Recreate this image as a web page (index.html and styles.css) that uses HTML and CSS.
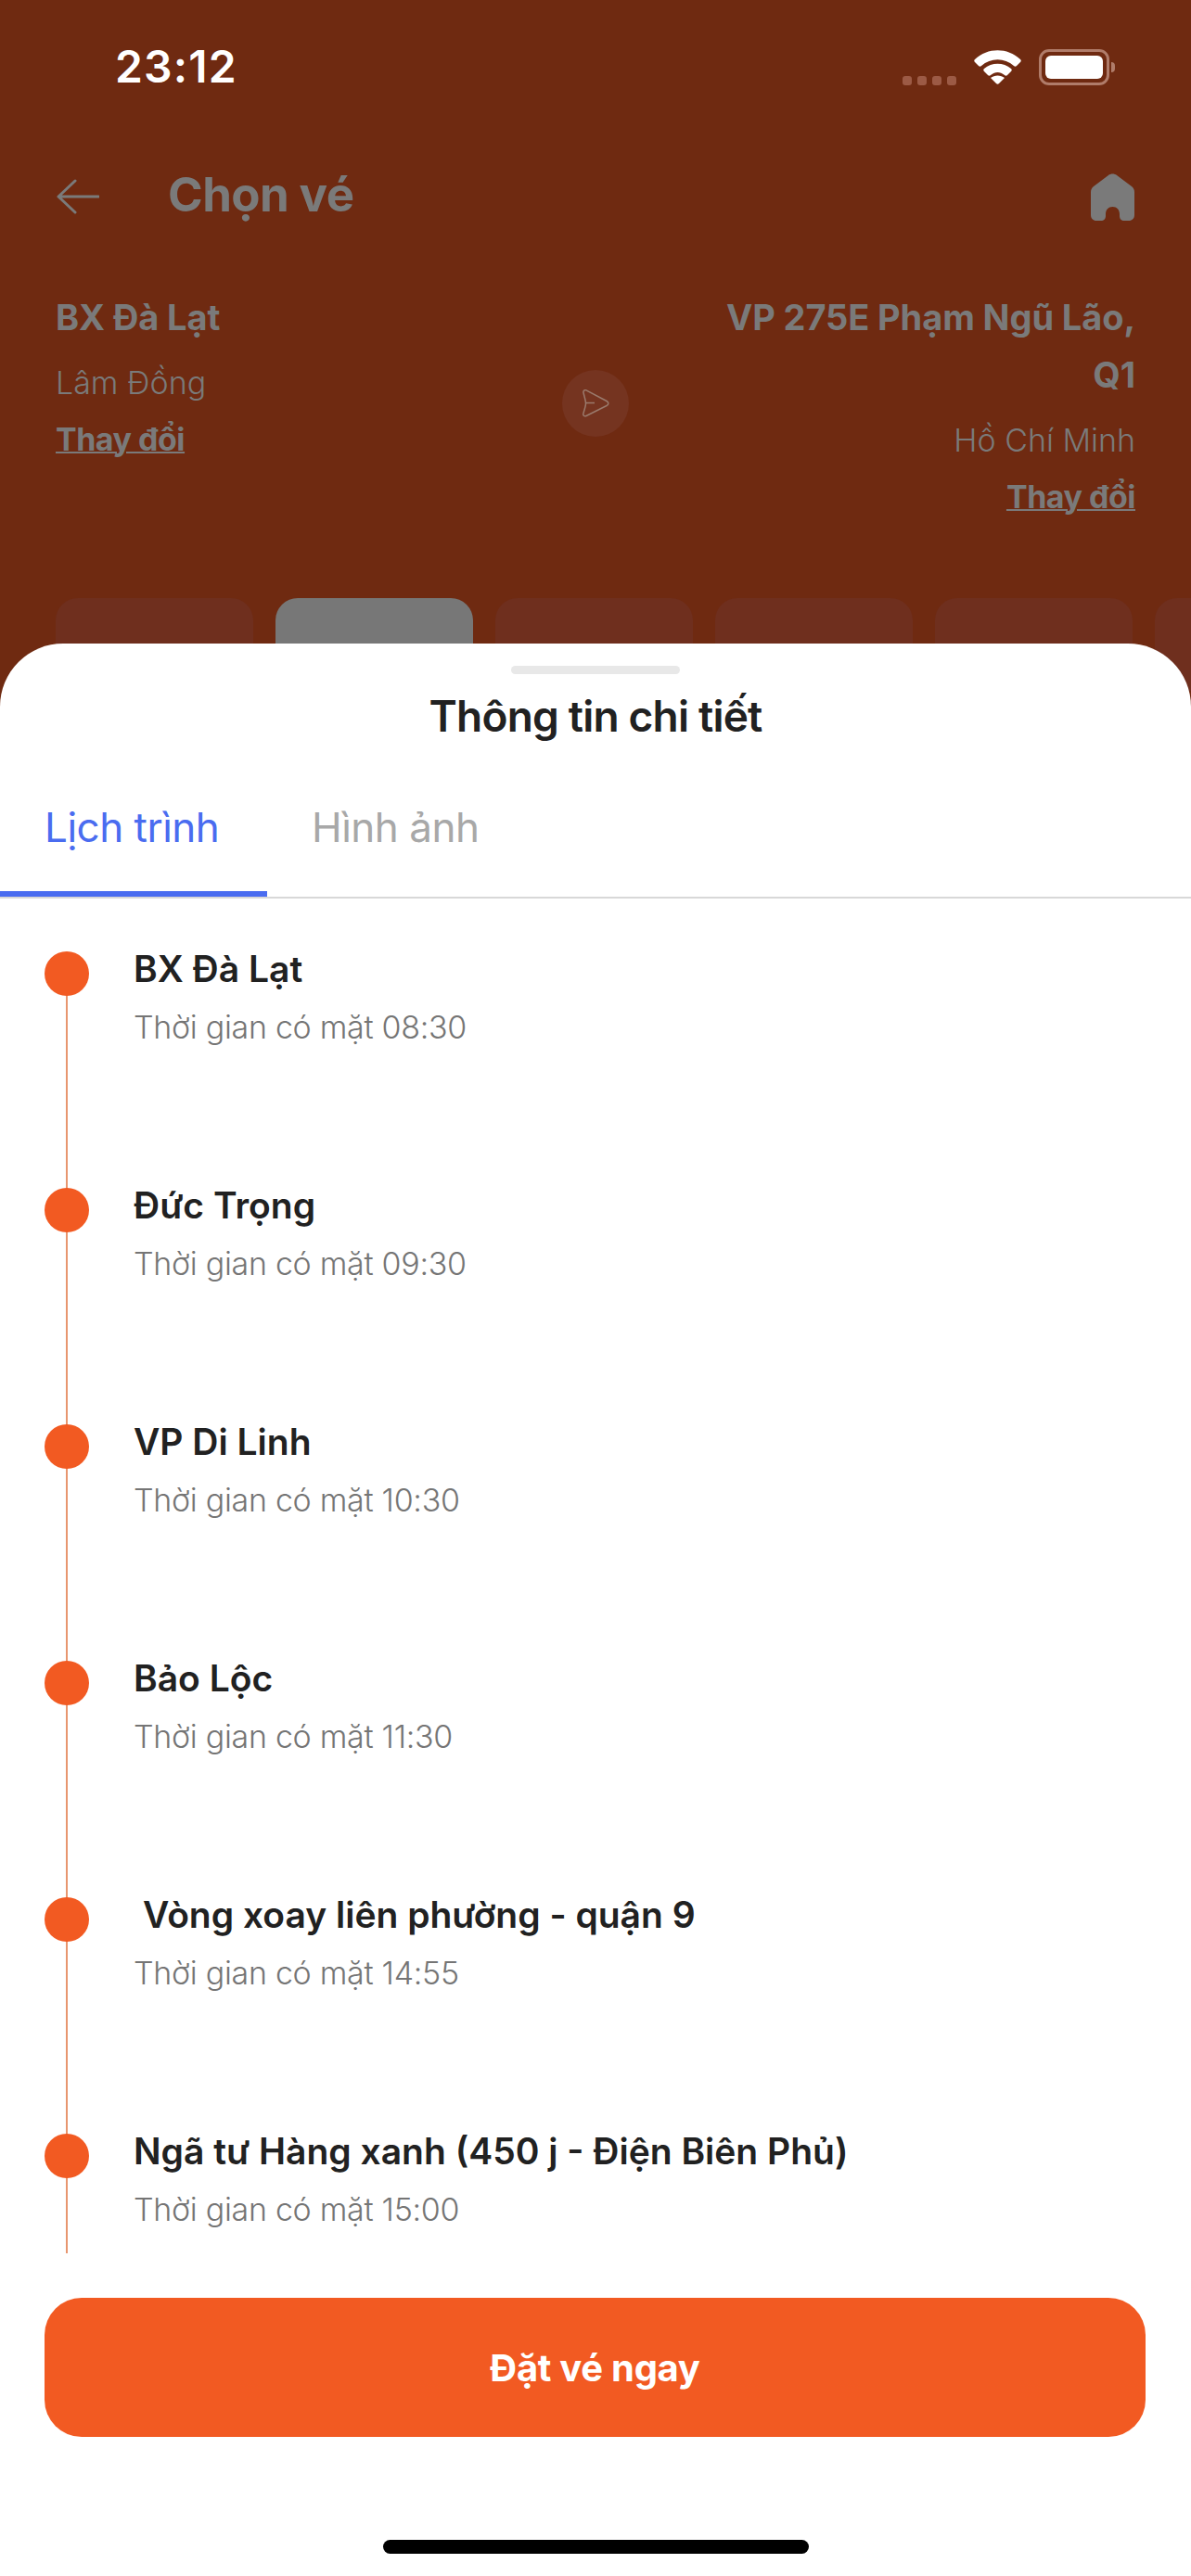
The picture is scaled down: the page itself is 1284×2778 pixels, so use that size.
FILE: index.html
```html
<!DOCTYPE html>
<html lang="vi">
<head>
    <meta charset="UTF-8">
    <meta name="viewport" content="width=device-width, initial-scale=1.0">
    <title>Chọn vé</title>
    <link rel="stylesheet" href="styles.css">
</head>
<body>

<div class="screen">
    <div class="status-bar">
        <span class="clock">23:12</span>
        <div class="status-icons">
            <div class="signal"><i></i><i></i><i></i><i></i></div>
            <svg class="wifi" viewBox="0 0 51 37" width="51" height="37">
                <path d="M1 10 C15 -3 36 -3 50 10 C51 11 51 12 50 13 L46 17 C45 18 44 18 43 17 C33 8 18 8 8 17 C7 18 6 18 5 17 L1 13 C0 12 0 11 1 10 Z" fill="#fff"/>
                <path d="M11 20 C19 13 32 13 40 20 C41 21 41 22 40 23 L36 27 C35 28 34 28 33 27 C28 23 23 23 18 27 C17 28 16 28 15 27 L11 23 C10 22 10 21 11 20 Z" fill="#fff"/>
                <path d="M24 36 L18 30 C22 26.500 29 26.500 33 30 L27 36 C26 37 25 37 24 36 Z" fill="#fff"/>
            </svg>
            <div class="battery"><div class="battery-fill"></div></div>
            <div class="battery-cap"></div>
        </div>
    </div>

    <header class="top-nav">
        <svg class="back" viewBox="0 0 46 38" width="46" height="38">
            <path d="M45 19 H2 M20 2 L2 19 L20 36" fill="none" stroke="#7a7a7a" stroke-width="3" stroke-linecap="round" stroke-linejoin="round"/>
        </svg>
        <h1>Chọn vé</h1>
        <svg class="home" viewBox="0 0 47 51" width="47" height="51">
            <path d="M19 2 L3 14 C1 15.500 0 17.500 0 20 V45 C0 48.500 2.500 51 6 51 H11 C14 51 16 49 16 46 V44 C16 39 19 36 23.500 36 C28 36 31 39 31 44 V46 C31 49 33 51 36 51 H41 C44.500 51 47 48.500 47 45 V20 C47 17.500 46 15.500 44 14 L28 2 C25.500 0 21.500 0 19 2 Z" fill="#7a7a7a"/>
        </svg>
    </header>

    <section class="route">
        <div class="route-end">
            <div class="route-name">BX Đà Lạt</div>
            <div class="route-area">Lâm Đồng</div>
            <a class="route-change">Thay đổi</a>
        </div>
        <div class="swap">
            <svg viewBox="0 0 30 30" width="30" height="30">
                <path d="M2 3.500 C1.500 1.500 3.500 0 5 0.800 L27 12.500 C29.500 14 29.500 16 27 17.500 L5 28.500 C3 29.500 1 28 2 25.500 C3 22 4.500 18 4.500 15 C4.500 12 2.800 7 2 3.500 Z M4.500 14.500 H14" fill="none" stroke="#9a7a6c" stroke-width="1.500" stroke-linejoin="round"/>
            </svg>
        </div>
        <div class="route-end right">
            <div class="route-name">VP 275E Phạm Ngũ Lão, Q1</div>
            <div class="route-area">Hồ Chí Minh</div>
            <a class="route-change">Thay đổi</a>
        </div>
    </section>

    <div class="date-strip">
        <div class="date-chip"></div>
        <div class="date-chip active"></div>
        <div class="date-chip"></div>
        <div class="date-chip"></div>
        <div class="date-chip"></div>
        <div class="date-chip"></div>
    </div>

    <div class="sheet">
        <div class="handle"></div>
        <h2>Thông tin chi tiết</h2>

        <div class="tabs">
            <div class="tab active">Lịch trình</div>
            <div class="tab">Hình ảnh</div>
        </div>

        <ul class="stops">
            <li class="stop">
                <div class="stop-name">BX Đà Lạt</div>
                <div class="stop-time">Thời gian có mặt 08:30</div>
            </li>
            <li class="stop">
                <div class="stop-name">Đức Trọng</div>
                <div class="stop-time">Thời gian có mặt 09:30</div>
            </li>
            <li class="stop">
                <div class="stop-name">VP Di Linh</div>
                <div class="stop-time">Thời gian có mặt 10:30</div>
            </li>
            <li class="stop">
                <div class="stop-name">Bảo Lộc</div>
                <div class="stop-time">Thời gian có mặt 11:30</div>
            </li>
            <li class="stop">
                <div class="stop-name indent">Vòng xoay liên phường - quận 9</div>
                <div class="stop-time">Thời gian có mặt 14:55</div>
            </li>
            <li class="stop">
                <div class="stop-name">Ngã tư Hàng xanh (450 j - Điện Biên Phủ)</div>
                <div class="stop-time">Thời gian có mặt 15:00</div>
            </li>
        </ul>

        <button class="book-btn">Đặt vé ngay</button>
        <div class="home-indicator"></div>
    </div>
</div>

</body>
</html>
```

FILE: styles.css
```css
:root {
    --backdrop: #6f2a11;
    --dim-text: #7a7a7a;
    --orange: #f25a22;
    --blue: #4a6cf0;
    --dark: #212121;
    --font-family: Inter, "Noto Sans", "Liberation Sans", sans-serif;
}

* { box-sizing: border-box; }

body {
    margin: 0;
    font-family: var(--font-family);
    background-color: var(--backdrop);
}

.screen {
    position: relative;
    width: 1284px;
    height: 2778px;
    overflow: hidden;
    background-color: var(--backdrop);
}

/* status bar */
.status-bar {
    height: 163px;
    padding: 44px 0 0 124px;
    display: flex;
    justify-content: space-between;
    align-items: flex-start;
}

.clock {
    color: #fff;
    font-size: 48px;
    font-weight: 600;
    line-height: 56px;
    letter-spacing: 1.2px;
}

.status-icons {
    display: flex;
    align-items: flex-start;
    padding: 9px 82px 0 0;
}

.signal {
    display: flex;
    gap: 6px;
    margin: 29px 19px 0 0;
}

.signal i {
    width: 10px;
    height: 10px;
    border-radius: 3px;
    background-color: #9c5a45;
}

.wifi {
    margin: 1px 19px 0 0;
}

.battery {
    width: 76px;
    height: 39px;
    padding: 4px;
    border: 3px solid #b07c6a;
    border-radius: 11px;
}

.battery-fill {
    height: 100%;
    background-color: #fff;
    border-radius: 6px;
}

.battery-cap {
    width: 4px;
    height: 11px;
    margin: 14px 0 0 2px;
    background-color: #b07c6a;
    border-radius: 0 6px 6px 0;
}

/* page behind the sheet */
.top-nav {
    height: 98px;
    padding: 0 61px;
    display: flex;
    align-items: center;
}

.top-nav h1 {
    margin: 0 0 5px 74px;
    flex: 1;
    color: var(--dim-text);
    font-size: 51px;
    font-weight: 700;
    letter-spacing: -0.6px;
}

.route {
    padding: 50px 60px 0;
    display: flex;
    justify-content: space-between;
    align-items: center;
}

.route-end {
    width: 470px;
    height: 248px;
    color: var(--dim-text);
}

.route-end.right { text-align: right; }

.route-name {
    font-size: 38px;
    font-weight: 700;
    line-height: 62px;
    letter-spacing: -0.1px;
}

.route-area {
    font-size: 34px;
    font-weight: 300;
    line-height: 58px;
    margin-top: 11px;
}

.route-change {
    display: block;
    margin-top: 3px;
    font-size: 34px;
    font-weight: 700;
    line-height: 58px;
    text-decoration: underline;
    text-decoration-thickness: 2px;
    letter-spacing: -0.5px;
}

.swap {
    width: 72px;
    height: 72px;
    flex-shrink: 0;
    border-radius: 50%;
    background-color: #753420;
    display: flex;
    align-items: center;
    justify-content: center;
}

.date-strip {
    margin-top: 86px;
    padding-left: 60px;
    display: flex;
    gap: 24px;
}

.date-chip {
    width: 213px;
    height: 100px;
    flex-shrink: 0;
    border-radius: 24px;
    background-color: #6f2f1e;
}

.date-chip.active { background-color: #777; }

/* bottom sheet */
.sheet {
    position: absolute;
    left: 0;
    right: 0;
    top: 694px;
    bottom: 0;
    padding-top: 24px;
    background-color: #fff;
    border-radius: 68px 68px 0 0;
    display: flex;
    flex-direction: column;
}

.handle {
    width: 182px;
    height: 9px;
    margin: 0 auto;
    border-radius: 5px;
    background-color: #e8e8e8;
}

.sheet h2 {
    margin: 14px 0 0;
    color: var(--dark);
    font-size: 46px;
    font-weight: 600;
    line-height: 62px;
    text-align: center;
    letter-spacing: -0.8px;
}

.tabs {
    margin-top: 37px;
    height: 129px;
    flex-shrink: 0;
    border-bottom: 2px solid #d8d8d8;
    display: flex;
}

.tab {
    width: 288px;
    height: 127px;
    padding-left: 48px;
    color: #a8a8a8;
    font-size: 44px;
    line-height: 104px;
    letter-spacing: -0.5px;
}

.tab.active {
    color: var(--blue);
    border-bottom: 6px solid var(--blue);
}

.stops {
    list-style: none;
    margin: 0;
    padding: 0 0 0 48px;
    height: 1461px;
    flex-shrink: 0;
    overflow: hidden;
}

.stop {
    position: relative;
    height: 255px;
    padding: 49px 0 0 96px;
}

/* dot + connector */
.stop::before {
    content: '';
    position: absolute;
    z-index: 1;
    left: 0;
    top: 57px;
    width: 48px;
    height: 48px;
    border-radius: 50%;
    background-color: var(--orange);
}

.stop::after {
    content: '';
    position: absolute;
    left: 23px;
    top: 0;
    bottom: 0;
    width: 2px;
    background-color: #e8966f;
}

.stop:first-child::after { top: 60px; }

.stop-name {
    color: var(--dark);
    font-size: 39px;
    font-weight: 600;
    line-height: 54px;
    white-space: nowrap;
}

.stop-name.indent { padding-left: 10px; }

.stop-time {
    margin-top: 13px;
    color: #757575;
    font-size: 34px;
    font-weight: 300;
    line-height: 46px;
    letter-spacing: -0.3px;
}

.book-btn {
    display: block;
    flex-shrink: 0;
    width: 1187px;
    height: 150px;
    margin: 48px 0 0 48px;
    border: none;
    border-radius: 40px;
    background-color: var(--orange);
    color: #fff;
    font-family: var(--font-family);
    font-size: 40px;
    font-weight: 700;
    letter-spacing: -0.3px;
}

.home-indicator {
    width: 459px;
    height: 15px;
    margin: 111px 0 0 413px;
    border-radius: 8px;
    background-color: #000;
}
```
